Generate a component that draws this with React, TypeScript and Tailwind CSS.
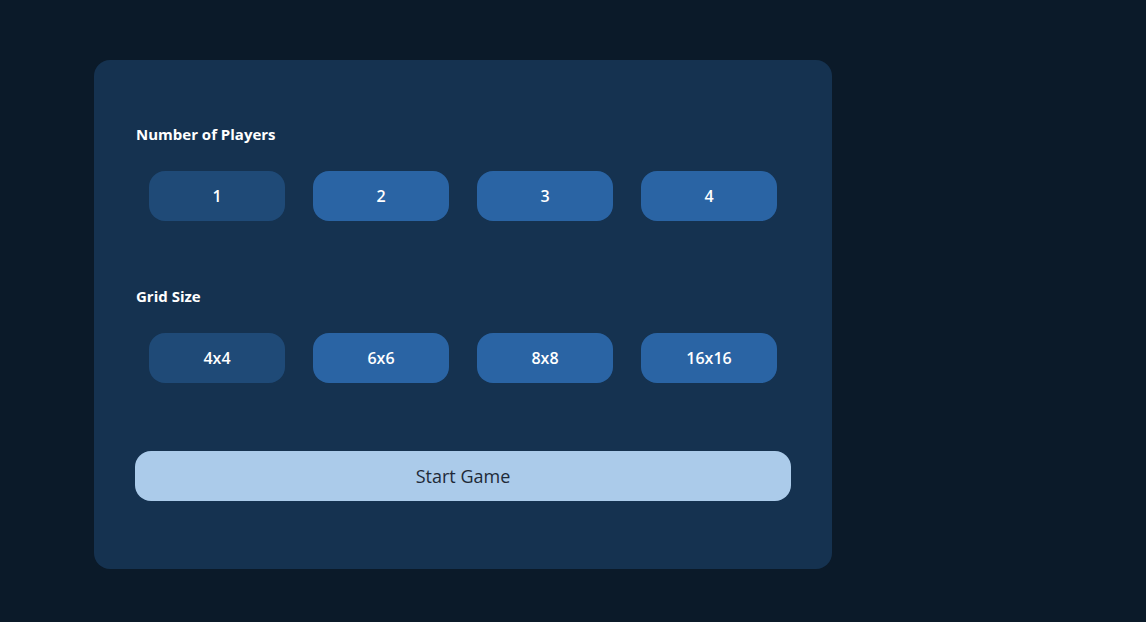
import React, { useState } from 'react';

const playerOptions = ['1', '2', '3', '4'];
const gridOptions = ['4x4', '6x6', '8x8', '16x16'];

const OptionRow: React.FC<{ options: string[]; selected: string; onSelect: (v: string) => void }> = ({ options, selected, onSelect }) => (
  <div className="flex">
    {options.map(opt => (
      <button
        key={opt}
        onClick={() => onSelect(opt)}
        className={`mx-[14px] w-[136px] h-[50px] rounded-[16px] text-white text-[16px] font-semibold ${
          opt === selected ? 'bg-[#1f4a77]' : 'bg-[#2a64a4]'
        }`}
      >
        {opt}
      </button>
    ))}
  </div>
);

export default function App() {
  const [players, setPlayers] = useState('1');
  const [grid, setGrid] = useState('4x4');

  return (
    <div className="min-h-[622px] bg-[#0b1a29] pl-[94px] pt-[60px]" style={{ fontFamily: '"Open Sans", Lato, sans-serif' }}>
      <div className="w-[738px] h-[509px] bg-[#153250] rounded-[16px] pl-[41px] pr-[41px] pt-[62px]">
        <h3 className="text-white text-[15px] font-bold leading-[24px] ml-px">Number of Players</h3>
        <div className="mt-[25px]">
          <OptionRow options={playerOptions} selected={players} onSelect={setPlayers} />
        </div>

        <h3 className="text-white text-[15px] font-bold leading-[24px] ml-px mt-[63px]">Grid Size</h3>
        <div className="mt-[25px]">
          <OptionRow options={gridOptions} selected={grid} onSelect={setGrid} />
        </div>

        <button className="mt-[68px] w-[656px] h-[50px] rounded-[16px] bg-[#abcbea] text-[#1e2a38] text-[18px]">
          Start Game
        </button>
      </div>
    </div>
  );
}
